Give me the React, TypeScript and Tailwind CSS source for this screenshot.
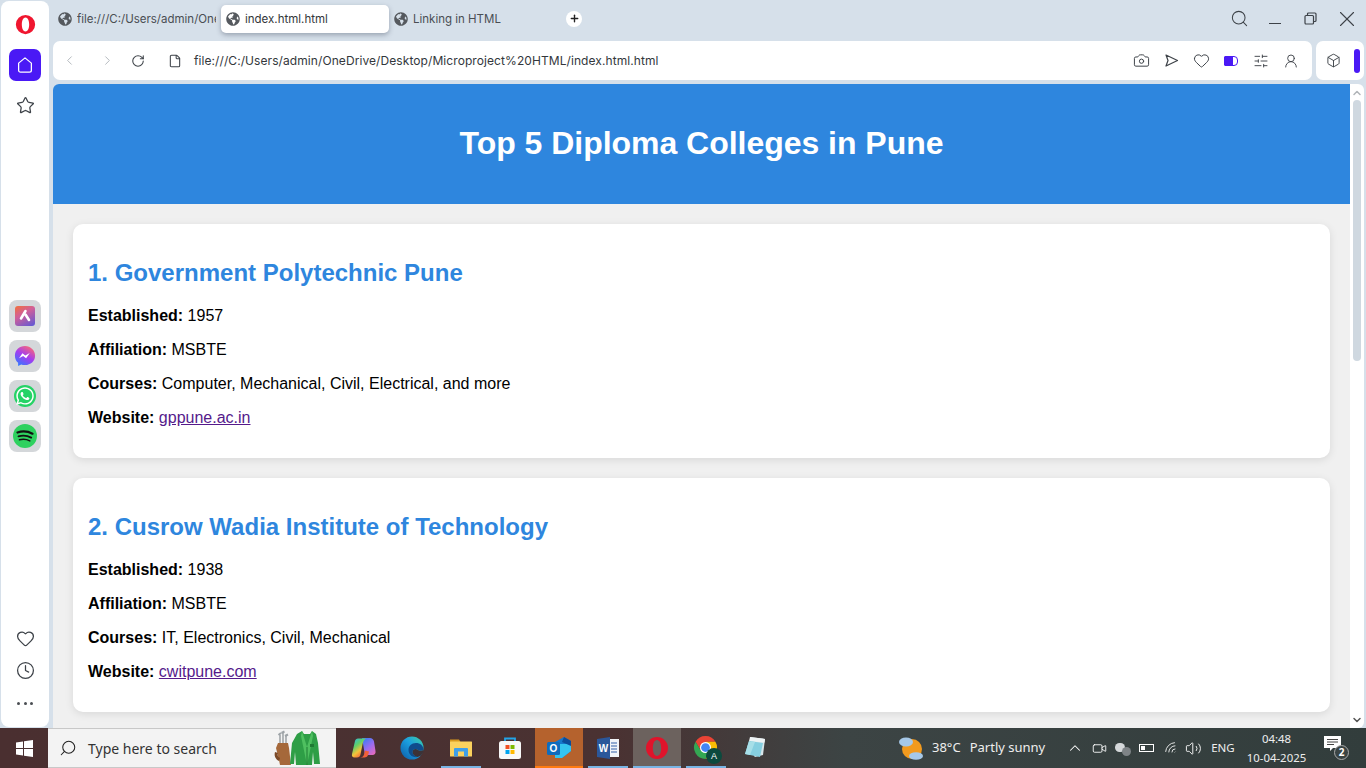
import React from "react";
import { ChevronLeft, ChevronRight, RotateCw, File, Camera, Heart, SlidersHorizontal, UserRound, Box, Search, X, Star, Clock, Plus, ChevronUp, ChevronDown, Wifi, Volume2, Video } from "lucide-react";
import { FaGlobeAmericas, FaWhatsapp } from "react-icons/fa";

const Globe = () => <FaGlobeAmericas className="w-[14px] h-[14px] text-[#55595e] shrink-0" />;

const Tab = ({ label, active, w }: { label: string; active?: boolean; w: string }) => (
  <div className={`${w} h-[28px] flex items-center gap-[5px] pl-[5px] shrink-0 overflow-hidden whitespace-nowrap rounded-[5px] text-[11.5px] ${active ? "bg-white shadow-[0_2px_5px_rgba(60,70,90,0.4)] text-[#33363a]" : "text-[#4a4e53]"}`}>
    <Globe />
    <span className="overflow-hidden pt-[2px]">{label}</span>
  </div>
);

const Opera = ({ size, stroke = "#f0162f" }: { size: number; stroke?: string }) => (
  <svg width={size} height={size} viewBox="0 0 24 24">
    <path fillRule="evenodd" fill={stroke} d="M12 1a11 11 0 1 0 0 22 11 11 0 0 0 0-22Zm0 3c2.600 0 4.200 3.600 4.200 8s-1.600 8-4.200 8-4.200-3.600-4.200-8 1.600-8 4.200-8Z" />
  </svg>
);

const DockTile = ({ children }: { children: React.ReactNode }) => (
  <div className="w-[32px] h-[32px] rounded-[8px] bg-[#d4d7da] flex items-center justify-center">{children}</div>
);

const Sidebar = () => (
  <div className="w-[48px] ml-[1px] mt-[1px] h-[726px] bg-white rounded-[8px] flex flex-col items-center shrink-0">
    <div className="mt-[13px] h-[22px]"><Opera size={21} /></div>
    <div className="mt-[13px] w-[32px] h-[32px] rounded-[7px] bg-[#4a19f5] flex items-center justify-center">
      <svg width="18" height="18" viewBox="0 0 24 24" fill="none" stroke="#fff" strokeWidth="1.7" strokeLinejoin="round"><path d="M12 2.500 3.500 9.500V19a2.500 2.500 0 0 0 2.500 2.500h12a2.500 2.500 0 0 0 2.500-2.500V9.500Z" /></svg>
    </div>
    <Star className="mt-[15px] w-[19px] h-[19px] text-[#3d4248]" strokeWidth={1.6} />
    <div className="mt-[185px] flex flex-col gap-[8px]">
      <DockTile>
        <div className="w-[20px] h-[20px] rounded-[3px] bg-[linear-gradient(150deg,#f2703a_0%,#d0609a_40%,#5a58d8_100%)] flex items-center justify-center">
          <svg width="14" height="14" viewBox="0 0 14 14" fill="none" stroke="#fff" strokeWidth="2.600" strokeLinecap="round"><path d="M7.500 2 3 9.500M7.500 5.500 11 11" /></svg>
        </div>
      </DockTile>
      <DockTile>
        <svg width="22" height="22" viewBox="0 0 24 24">
          <defs><linearGradient id="ms" x1="0.2" y1="1" x2="0.8" y2="0"><stop offset="0" stopColor="#2f7bff" /><stop offset="0.5" stopColor="#a33df0" /><stop offset="1" stopColor="#ff6a70" /></linearGradient></defs>
          <path fill="url(#ms)" d="M12 1C5.800 1 1 5.500 1 11.600c0 3.200 1.300 5.900 3.500 7.800V23l3.300-1.800c1.300.4 2.700.6 4.200.6 6.200 0 11-4.500 11-10.200S18.200 1 12 1Z" />
          <path fill="#fff" d="m5.500 14.500 3.700-5.500 3.200 2.500 4.800-2.700-4 5.600-3.200-2.500Z" />
        </svg>
      </DockTile>
      <DockTile>
        <div className="w-[22px] h-[22px] rounded-full bg-[#25d366] flex items-center justify-center relative">
          <FaWhatsapp className="w-[20px] h-[20px] text-white" />
        </div>
      </DockTile>
      <DockTile>
        <div className="w-[24px] h-[24px] rounded-full bg-[#2ed15f] flex items-center justify-center">
          <svg width="18" height="14" viewBox="0 0 18 14" fill="none" stroke="#111" strokeLinecap="round"><path d="M1.500 3.500C6 2 12 2.300 16.500 4.700" strokeWidth="2.200" /><path d="M2.500 7.300c4-1.100 8.800-.8 12.700 1.300" strokeWidth="1.900" /><path d="M3.500 10.800c3.300-.8 7-.6 10.300 1.100" strokeWidth="1.600" /></svg>
        </div>
      </DockTile>
    </div>
    <Heart className="mt-[177px] w-[19px] h-[19px] text-[#3d4248]" strokeWidth={1.6} />
    <Clock className="mt-[13px] w-[19px] h-[19px] text-[#3d4248]" strokeWidth={1.6} />
    <div className="mt-[22px] flex gap-[3.5px]">
      <span className="w-[3px] h-[3px] rounded-full bg-[#4a4e53]" />
      <span className="w-[3px] h-[3px] rounded-full bg-[#4a4e53]" />
      <span className="w-[3px] h-[3px] rounded-full bg-[#4a4e53]" />
    </div>
  </div>
);

const TabBar = () => (
  <div className="h-[41px] flex items-center pr-[6px]">
    <div className="flex items-center -mt-[4px]">
      <Tab label="file:///C:/Users/admin/OneDrive" w="w-[163px]" />
      <div className="w-[5px]" />
      <Tab label="index.html.html" active w="w-[168px]" />
      <Tab label="Linking in HTML" w="w-[177px]" />
      <div className="w-[16px] h-[16px] rounded-full bg-white flex items-center justify-center"><Plus className="w-[11px] h-[11px] text-[#222]" strokeWidth={3} /></div>
    </div>
    <div className="ml-auto flex items-center -mt-[4px]">
      <Search className="w-[19px] h-[19px] text-[#3d4248]" strokeWidth={1.3} />
      <div className="w-[12px] h-[1.5px] bg-[#3d4248] ml-[20px] mt-[10px]" />
      <svg className="ml-[23px]" width="13" height="13" viewBox="0 0 13 13" fill="none" stroke="#3d4248" strokeWidth="1.200"><rect x="1" y="3.500" width="8.500" height="8.500" rx="1" /><path d="M3.500 3.500V2a1 1 0 0 1 1-1H11a1 1 0 0 1 1 1v6.500a1 1 0 0 1-1 1H9.500" /></svg>
      <X className="ml-[17px] w-[26px] h-[26px] text-[#3d4248]" strokeWidth={1} />
    </div>
  </div>
);

const BarCell = ({ children }: { children: React.ReactNode }) => <div className="w-[30px] flex items-center justify-center">{children}</div>;

const AddressBar = () => (
  <div className="flex gap-[4px] h-[39px] pr-[2px]">
    <div className="flex-1 bg-white rounded-[7px] flex items-center text-[#33373c]">
      <ChevronLeft className="ml-[9px] w-[15px] h-[15px] text-[#b6bbc0]" strokeWidth={1.6} />
      <ChevronRight className="ml-[23px] w-[15px] h-[15px] text-[#b6bbc0]" strokeWidth={1.6} />
      <RotateCw className="ml-[16px] w-[14px] h-[14px] text-[#3d4248]" strokeWidth={1.8} />
      <File className="ml-[23px] w-[14px] h-[14px] text-[#3d4248]" strokeWidth={1.8} />
      <span className="ml-[12px] mt-[1px] text-[12px] whitespace-nowrap tracking-[0.08px]">file:///C:/Users/admin/OneDrive/Desktop/Microproject%20HTML/index.html.html</span>
      <div className="ml-auto flex items-center mr-[6px]">
        <BarCell><Camera className="w-[17px] h-[17px] text-[#3d4248]" strokeWidth={1.4} /></BarCell>
        <BarCell><svg width="15" height="15" viewBox="0 0 15 15" fill="none" stroke="#3d4248" strokeWidth="1.200" strokeLinejoin="round"><path d="M2 2 13.500 7.500 2 13l2-5.500Z" /></svg></BarCell>
        <BarCell><Heart className="w-[17px] h-[17px] text-[#3d4248]" strokeWidth={1.4} /></BarCell>
        <BarCell><div className="w-[14px] h-[10px] rounded-l-[1px] rounded-r-[4px] border border-[#4a19f5] flex overflow-hidden"><div className="w-[8px] bg-[#4a19f5]" /></div></BarCell>
        <BarCell><SlidersHorizontal className="w-[16px] h-[16px] text-[#3d4248]" strokeWidth={1.4} /></BarCell>
        <BarCell><UserRound className="w-[16px] h-[16px] text-[#3d4248]" strokeWidth={1.4} /></BarCell>
      </div>
    </div>
    <div className="w-[48px] bg-white rounded-[7px] flex items-center pl-[10px]">
      <Box className="w-[15px] h-[15px] text-[#3d4248]" strokeWidth={1.5} />
      <div className="ml-[13px] w-[6px] h-[24px] rounded-[3px] bg-[#4a19f5]" />
    </div>
  </div>
);

const College = ({ title, est, courses, site }: { title: string; est: string; courses: string; site: string }) => (
  <section className="bg-white rounded-[10px] p-[15px] mb-[20px] shadow-[0_2px_8px_rgba(0,0,0,0.1)]">
    <h2 className="text-[24px] leading-[28px] font-bold text-[#2e86de] mt-[20px] mb-[20px]">{title}</h2>
    <p className="text-[16px] leading-[18px] my-[16px]"><b>Established:</b> {est}</p>
    <p className="text-[16px] leading-[18px] my-[16px]"><b>Affiliation:</b> MSBTE</p>
    <p className="text-[16px] leading-[18px] my-[16px]"><b>Courses:</b> {courses}</p>
    <p className="text-[16px] leading-[18px] mt-[16px] mb-[16px]"><b>Website:</b> <a className="text-[#551a8b] underline">{site}</a></p>
  </section>
);

const Page = () => (
  <div className="flex h-[644px] mt-[4px] rounded-tl-[6px] overflow-hidden">
    <div className="flex-1 bg-[#f0f0f0] overflow-hidden text-black font-['Liberation_Sans',Arial,sans-serif]">
      <header className="h-[120px] pb-[2px] bg-[#2e86de] flex items-center justify-center">
        <h1 className="text-[32px] font-bold text-white tracking-[-0.03px]">Top 5 Diploma Colleges in Pune</h1>
      </header>
      <main className="p-[20px]">
        <College title="1. Government Polytechnic Pune" est="1957" courses="Computer, Mechanical, Civil, Electrical, and more" site="gppune.ac.in" />
        <College title="2. Cusrow Wadia Institute of Technology" est="1938" courses="IT, Electronics, Civil, Mechanical" site="cwitpune.com" />
      </main>
    </div>
    <div className="w-[14px] bg-white flex flex-col items-center mr-[2px] rounded-r-[6px]">
      <ChevronUp className="w-[12px] h-[12px] mt-[3px] text-[#b0b4b8]" strokeWidth={3} />
      <div className="mt-[1px] w-[8px] h-[261px] rounded-[4px] bg-[#cfd8e0]" />
      <ChevronDown className="w-[12px] h-[12px] mt-auto mb-[2px] text-[#555]" strokeWidth={3} />
    </div>
  </div>
);

const TaskCell = ({ children, bg, bar, full }: { children: React.ReactNode; bg?: string; bar?: string; full?: boolean }) => (
  <div className={`w-[48px] h-[40px] relative flex items-center justify-center shrink-0 ${bg ?? ""}`}>
    {children}
    {bar && <div className={`absolute bottom-0 h-[2px] ${full ? "left-0 right-0" : "left-[4px] right-[4px]"} ${bar}`} />}
  </div>
);

const Taskbar = () => (
  <div className="h-[40px] flex items-center bg-[linear-gradient(90deg,#4a2f30_0%,#4a3232_45%,#3c4444_62%,#323d3c_100%)] text-white font-['Noto_Sans',sans-serif]">
    <div className="w-[48px] flex justify-center">
      <svg width="17" height="17" viewBox="0 0 17 17" fill="#fff"><path d="M0 2.400 7 1.400v6.600H0ZM8 1.200 17 0v8H8ZM0 9h7v6.600L0 14.600ZM8 9h9v8l-9-1.200Z" /></svg>
    </div>
    <div className="w-[288px] h-[40px] bg-[#f3f3f3] flex items-center relative text-[#222] border-y border-[#c8c8c8]">
      <Search className="ml-[11px] w-[18px] h-[18px] text-[#222] -scale-x-100" strokeWidth={1.4} />
      <span className="ml-[11px] text-[14px] text-[#333]">Type here to search</span>
      <svg className="absolute left-[226px] top-[1px]" width="46" height="37" viewBox="0 0 46 37">
        <path d="M2 18 4 13h10l1 5 2 17H6l-1-5Z" fill="#a5683a" />
        <path d="M1 22c-1 3 0 7 4 9l1-3c-2-1-3-3-2-5Z" fill="#7c4a28" />
        <path d="M6 13V5M9 13V3M12 13V6" stroke="#8f9599" strokeWidth="1.300" />
        <path d="M4.500 5 7 3M7.500 3l3-1.500M11 6l3-1.500" stroke="#9da3a7" strokeWidth="2" />
        <path d="M23 4 28 1 30 4h6l2-3 4 3 2 9 2 21h-6l-1-12-1 13H22l-1-13-1 12h-4l2-21Z" fill="#2e9e46" />
        <path d="M28 1 33 17 38 1l1 5-6 29-6-29Z" fill="#4fc060" />
        <path d="M33 17v18" stroke="#1f7a33" strokeWidth="1" />
        <rect x="36" y="14" width="4" height="3" fill="#1f7a33" />
      </svg>
    </div>
    <div className="flex gap-[1px] ml-[3px]">
      <TaskCell>
        <svg width="25" height="24" viewBox="0 0 25 24">
          <defs>
            <linearGradient id="cpa" x1="0" y1="0" x2="0.6" y2="1"><stop offset="0" stopColor="#28b6f0" /><stop offset="0.4" stopColor="#5fd06a" /><stop offset="0.7" stopColor="#f4c23a" /><stop offset="1" stopColor="#f0603a" /></linearGradient>
            <linearGradient id="cpb" x1="0.2" y1="0" x2="0.9" y2="1"><stop offset="0" stopColor="#3a7cf0" /><stop offset="0.5" stopColor="#9a6cf0" /><stop offset="1" stopColor="#ea6ab8" /></linearGradient>
          </defs>
          <path fill="url(#cpb)" d="M11 2h8c2 0 3.500 1.500 4 3.500L24.500 15c.5 2.500-1 4-3 4H14Z" />
          <path fill="url(#cpa)" d="M7 2.500h8c-2 1-3 3-3.500 6l-2 10c-.4 2-1.500 3-3.500 3H3.500C1.500 21.500.5 20 1 18L4 5c.4-1.500 1.500-2.500 3-2.500Z" />
          <path fill="#f0603a" d="M9 21.500c2 0 3.500-1 4-3l1-4 4 1c-.5 3-1.500 6-4.500 6Z" />
        </svg>
      </TaskCell>
      <TaskCell>
        <svg width="24" height="24" viewBox="0 0 24 24">
          <defs>
            <linearGradient id="ed" x1="0" y1="1" x2="1" y2="0"><stop offset="0" stopColor="#0c59a4" /><stop offset="0.55" stopColor="#1b9fe0" /><stop offset="1" stopColor="#40d0a0" /></linearGradient>
          </defs>
          <circle cx="12" cy="12" r="11.500" fill="url(#ed)" />
          <path d="M23.500 14c0-4.500-3.500-7-7.500-7-4.500 0-7.500 3-7.500 7 0 4.500 4 8 9 7-2.500-.5-5-2.500-5-5 0-2 1.500-3 3-3 2.500 0 3 3 8 1Z" fill="#0f4c8c" />
          <path d="M23.500 14c-5 2-5.500-1-8-1-1.500 0-3 1-3 3 0 2.500 2.500 4.500 5 5 4-1 6-4 6-7Z" fill="#3d3236" />
        </svg>
      </TaskCell>
      <TaskCell bar="bg-[#78b4e4]">
        <svg width="22" height="20" viewBox="0 0 22 20">
          <path d="M0 1.500h9l1.500 2.500H0Z" fill="#d99a1e" />
          <rect y="3.500" width="22" height="15" rx="0.500" fill="#fbd25e" />
          <path d="M4 18.500V11a1 1 0 0 1 1-1h12a1 1 0 0 1 1 1v7.500h-4V13.500H8v5Z" fill="#3f9fe8" />
        </svg>
      </TaskCell>
      <TaskCell>
        <svg width="24" height="24" viewBox="0 0 24 24">
          <path d="M7 7V2.500h10V7" fill="none" stroke="#22a5e8" strokeWidth="1.800" />
          <rect x="1" y="5" width="22" height="18" rx="2.500" fill="#f8f8f8" />
          <rect x="7.500" y="9" width="4" height="4" fill="#f25022" /><rect x="12.500" y="9" width="4" height="4" fill="#7fba00" /><rect x="7.500" y="14" width="4" height="4" fill="#00a4ef" /><rect x="12.500" y="14" width="4" height="4" fill="#ffb900" />
        </svg>
      </TaskCell>
      <TaskCell bg="bg-[#b5622d]" bar="bg-[#ff7a10]" full>
        <svg width="26" height="24" viewBox="0 0 26 24">
          <path d="M9 6 18 1l7 4v10L16 22H9Z" fill="#1577cc" />
          <path d="M14 8h11v7l-9 7H9V14Z" fill="#34c4f0" />
          <path d="M18 1l7 4v5L16 6Z" fill="#0c4c9a" />
          <rect x="1" y="6" width="13" height="13" rx="1.500" fill="#0f6cbd" />
          <text x="7.500" y="16" textAnchor="middle" fontSize="10" fontWeight="700" fill="#fff" fontFamily="Liberation Sans">O</text>
        </svg>
      </TaskCell>
      <TaskCell bar="bg-[#78b4e4]">
        <svg width="24" height="24" viewBox="0 0 24 24">
          <rect x="7" y="3" width="16" height="18" fill="#f1f4f8" />
          <path d="M15 7h6M15 10h6M15 13h6M15 16h6" stroke="#3561a8" strokeWidth="1.200" />
          <path d="M1 3 14 1v22L1 21Z" fill="#2b579a" />
          <text x="7.500" y="16" textAnchor="middle" fontSize="10" fontWeight="700" fill="#fff" fontFamily="Liberation Sans">W</text>
        </svg>
      </TaskCell>
      <TaskCell bg="bg-[#6c625e]" bar="bg-[#78b4e4]" full><Opera size={24} stroke="#e0142b" /></TaskCell>
      <TaskCell bar="bg-[#78b4e4]">
        <div className="relative w-[26px] h-[26px]">
          <svg width="25" height="25" viewBox="0 0 24 24">
            <path d="M12 1a11 11 0 0 1 9.530 5.500H12L7.240 14.750 2.470 6.500A11 11 0 0 1 12 1Z" fill="#ea4335" />
            <path d="M21.530 6.500A11 11 0 0 1 12 23l4.760-8.250L12 6.500Z" fill="#fbbc04" />
            <path d="M2.470 6.500A11 11 0 0 0 12 23l4.760-8.250H7.240Z" fill="#34a853" />
            <circle cx="12" cy="12" r="5.300" fill="#fff" />
            <circle cx="12" cy="12" r="4.200" fill="#4285f4" />
          </svg>
          <div className="absolute right-[-3px] bottom-[-3px] w-[16px] h-[16px] rounded-full bg-[#0c4a3e] text-[9px] leading-[16px] text-center text-white font-['Liberation_Sans',sans-serif]">A</div>
        </div>
      </TaskCell>
      <TaskCell>
        <svg width="24" height="24" viewBox="0 0 24 24">
          <path d="M7 1 22 3l-2 16-8 2-1-1Z" fill="#d8e6ea" />
          <path d="M7 1 22 3l-.5 3.500L6 5Z" fill="#eef3f4" />
          <path d="M6 5 20 7l-3 14-15-3Z" fill="#86cfe0" />
          <path d="M6 5 12 6 7 19l-5-1Z" fill="#a7dfe8" />
        </svg>
      </TaskCell>
    </div>
    <div className="flex-1 flex items-center min-w-0">
      <svg className="ml-[120px]" width="25" height="24" viewBox="0 0 25 24">
        <circle cx="13" cy="13" r="10" fill="#f29a1e" />
        <ellipse cx="7" cy="6" rx="7" ry="4.500" fill="#a6c8e8" />
        <ellipse cx="17" cy="20" rx="7" ry="3.800" fill="#a6c8e8" />
      </svg>
      <span className="ml-[8px] text-[13px] text-[#eee]">38°C</span>
      <span className="ml-[9px] text-[13px] text-[#eee]">Partly sunny</span>
      <ChevronUp className="ml-[21px] w-[18px] h-[18px] text-white" strokeWidth={1.4} />
      <Video className="ml-[8px] w-[15px] h-[15px] text-white" strokeWidth={1.4} />
      <div className="ml-[8px] relative w-[15px] h-[12px]">
        <div className="absolute left-0 top-[1px] w-[10px] h-[9px] rounded-full bg-[#d5d8da]" />
        <div className="absolute right-[-1px] bottom-[-2px] w-[9px] h-[9px] rounded-full bg-[#7e8386]" />
      </div>
      <div className="ml-[9px] w-[15px] h-[8px] border border-white flex p-[1px]"><div className="w-[4px] bg-white" /></div>
      <Wifi className="ml-[10px] w-[15px] h-[15px] text-white -rotate-45" strokeWidth={1.3} />
      <Volume2 className="ml-[6px] w-[17px] h-[17px] text-white" strokeWidth={1.3} />
      <span className="ml-[9px] text-[11.5px] text-[#eee]">ENG</span>
      <div className="ml-[12px] -mt-[1px] flex flex-col items-center text-[11.4px] leading-[19px] text-[#eee]">
        <span>04:48</span>
        <span>10-04-2025</span>
      </div>
      <div className="ml-[18px] relative w-[24px] h-[24px]">
        <svg width="17" height="16" viewBox="0 0 17 16"><path d="M0 0h17v12H9l-3 3v-3H0Z" fill="#fff" /><path d="M3 3.500h11M3 6h11M3 8.500h7" stroke="#444" strokeWidth="1" /></svg>
        <div className="absolute right-[-1px] bottom-[0px] w-[15px] h-[15px] rounded-full bg-[#3a4444] border border-[#aaa] text-[10px] leading-[13px] text-center font-bold">2</div>
      </div>
    </div>
  </div>
);

export default function App() {
  return (
    <div className="w-[1366px] h-[768px] overflow-hidden flex flex-col font-['Inter',sans-serif]">
      <div className="h-[728px] flex bg-[#d6e0ea]">
        <Sidebar />
        <div className="flex-1 min-w-0 ml-[4px]">
          <TabBar />
          <AddressBar />
          <Page />
        </div>
      </div>
      <Taskbar />
    </div>
  );
}
